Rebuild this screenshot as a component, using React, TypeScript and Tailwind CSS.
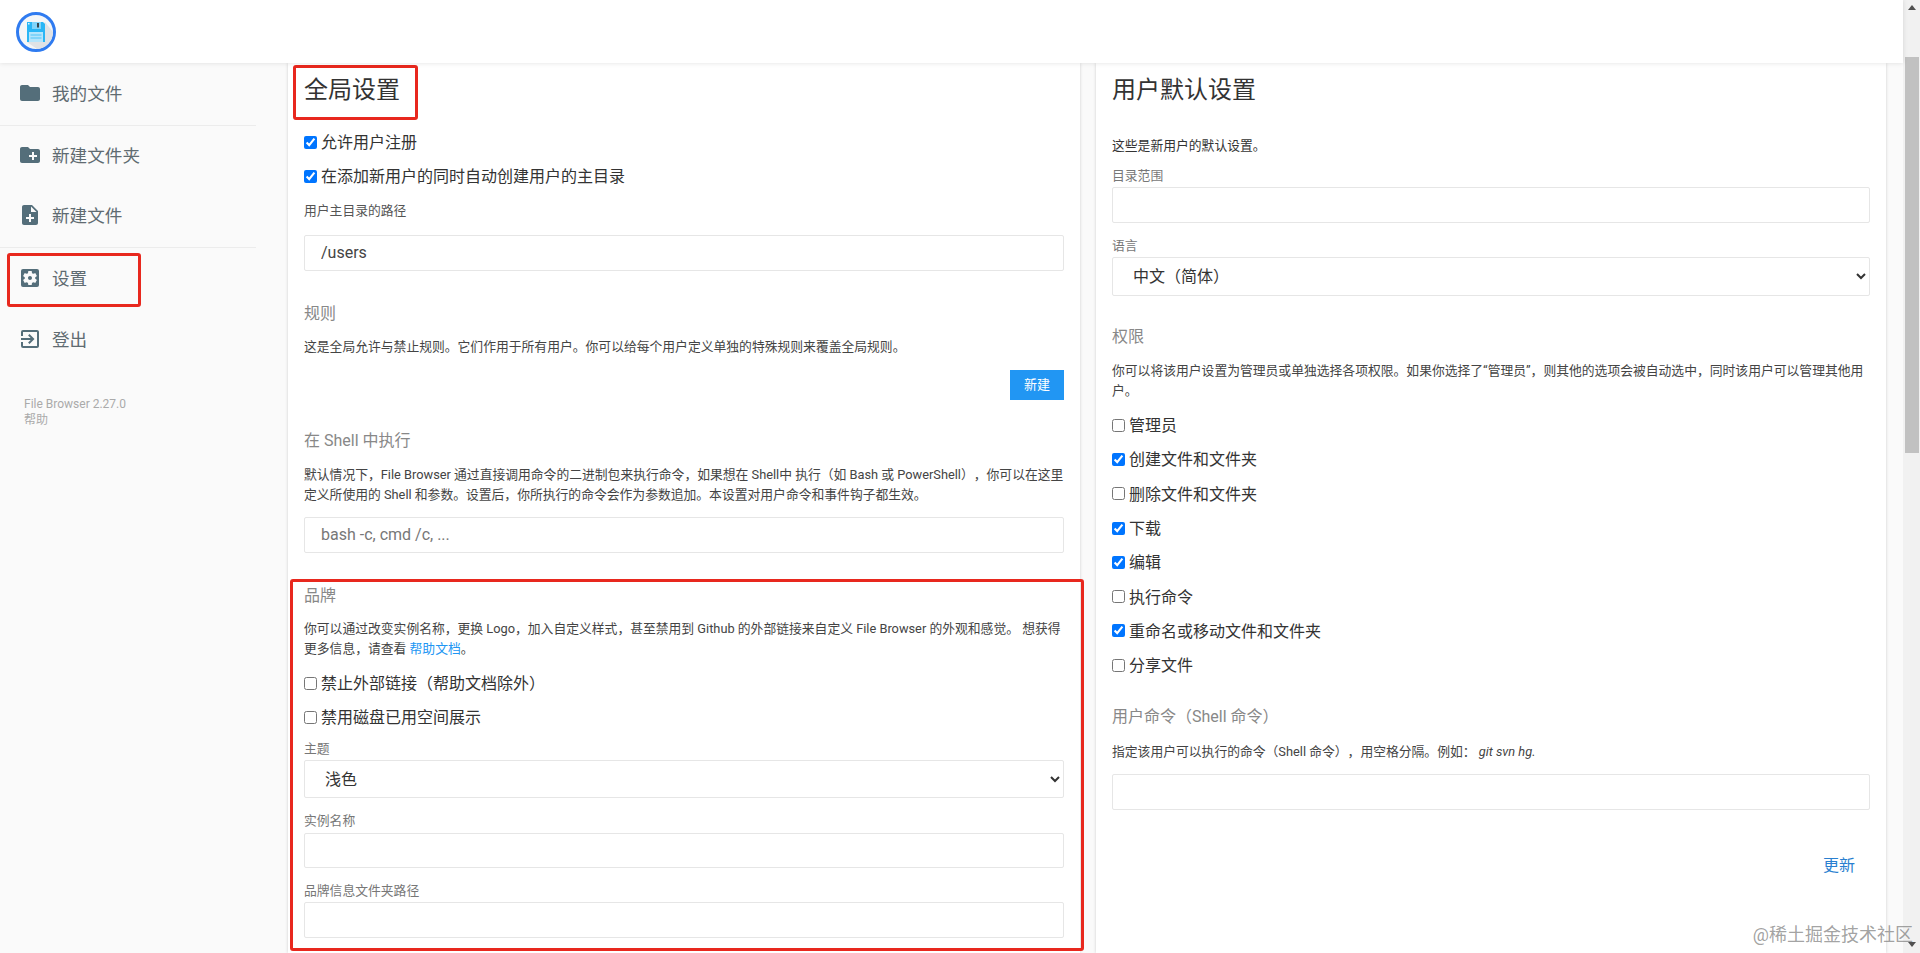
import React from "react";
import {
  MdCreateNewFolder,
  MdExitToApp,
  MdFolder,
  MdNoteAdd,
  MdSettingsApplications,
} from "react-icons/md";

type NavProps = { icon: React.ReactNode; label: string; className?: string };

function NavItem({ icon, label, className = "" }: NavProps) {
  return (
    <div className={`flex h-12 items-center gap-2.5 pl-[18px] text-[17.6px] text-[#5f6b71] ${className}`}>
      <span className="text-[#546e7a]">{icon}</span>
      <span className="pt-0.5">{label}</span>
    </div>
  );
}

function Check({ label, checked = false, className = "h-[34px]" }: { label: string; checked?: boolean; className?: string }) {
  return (
    <label className={`flex items-center text-base text-[#333] ${className}`}>
      <input type="checkbox" defaultChecked={checked} className="mr-1" />
      <span className="pt-0.5">{label}</span>
    </label>
  );
}

function Field({ value, placeholder, className = "" }: { value?: string; placeholder?: string; className?: string }) {
  return (
    <input
      type="text"
      defaultValue={value}
      placeholder={placeholder}
      className={`block h-9 w-full rounded-[2px] border border-[#e6e6e6] bg-white px-4 pb-0.5 text-base text-[#444] placeholder:text-[#777] ${className}`}
    />
  );
}

function Picker({ value, className = "" }: { value: string; className?: string }) {
  return (
    <select className={`block w-full rounded-[2px] border border-[#e6e6e6] bg-white px-4 text-base text-[#333] ${className}`}>
      <option>{value}</option>
    </select>
  );
}

function Logo() {
  return (
    <svg width="40" height="40" viewBox="0 0 40 40">
      <circle cx="20" cy="20" r="18.5" fill="#f4f6f8" stroke="#2f7bf0" strokeWidth="3" />
      <path d="M11 30 L29 10 L37 20 A17 17 0 0 1 21 37 Z" fill="#dfe2e5" />
      <path d="M11 10 H27 L29 12 V30 H11 Z" fill="#29b6f6" />
      <rect x="16" y="10" width="9" height="7" fill="#81d4fa" />
      <rect x="21" y="11" width="2" height="4.5" fill="#37474f" />
      <rect x="13" y="20" width="14" height="10" fill="#b3e5fc" />
      <path d="M14.5 23 H25.5 M14.5 26 H25.5" stroke="#4fc3f7" strokeWidth="1" />
      <rect x="12" y="11" width="1.5" height="1.5" fill="#e1f5fe" />
    </svg>
  );
}

function Sidebar() {
  return (
    <aside className="w-[272px] shrink-0 pt-1.5">
      <NavItem icon={<MdFolder size={24} />} label="我的文件" />
      <div className="mt-2 h-px w-[256px] bg-[#ececec]" />
      <NavItem icon={<MdCreateNewFolder size={24} />} label="新建文件夹" className="mt-[5px]" />
      <NavItem icon={<MdNoteAdd size={24} />} label="新建文件" className="mt-3" />
      <div className="mt-2 h-px w-[256px] bg-[#ececec]" />
      <div className="relative mt-1.5">
        <NavItem icon={<MdSettingsApplications size={24} />} label="设置" />
        <div className="absolute -top-px -bottom-[5px] left-[7px] w-[134px] rounded-[3px] border-[3px] border-[#e8281e]" />
      </div>
      <NavItem icon={<MdExitToApp size={24} />} label="登出" className="mt-[13px]" />
      <div className="mt-[33px] pl-6 text-xs leading-4 text-[#aaa]">
        <p>File Browser 2.27.0</p>
        <p>帮助</p>
      </div>
    </aside>
  );
}

function GlobalCard() {
  return (
    <section className="w-[792px] shrink-0 bg-white px-4 pt-[9px] shadow-[0_0_3px_rgba(0,0,0,0.18)]">
      <div className="relative">
        <h2 className="pt-0.5 text-2xl leading-8 font-normal text-[#333]">全局设置</h2>
        <div className="absolute -top-[7px] -bottom-[14px] -left-[11px] z-10 w-[125px] rounded-[3px] border-[3px] border-[#e8281e]" />
      </div>
      <div className="mt-[19px]">
        <Check label="允许用户注册" checked />
        <Check label="在添加新用户的同时自动创建用户的主目录" checked />
      </div>
      <p className="mt-[9px] text-[12.8px] leading-[18px] text-[#555]">用户主目录的路径</p>
      <Field value="/users" className="mt-[15px]" />

      <h3 className="mt-[29px] pt-0.5 text-base leading-6 font-normal text-[#888]">规则</h3>
      <p className="mt-[11px] text-[12.8px] leading-5 text-[#444]">
        这是全局允许与禁止规则。它们作用于所有用户。你可以给每个用户定义单独的特殊规则来覆盖全局规则。
      </p>
      <div className="mt-[13px] flex justify-end">
        <button className="h-[30px] w-[54px] bg-[#2196f3] text-[13px] text-white">新建</button>
      </div>

      <h3 className="mt-[29px] text-base leading-6 font-normal text-[#888]">在 Shell 中执行</h3>
      <p className="mt-3 text-[12.8px] leading-5 text-[#444]">
        默认情况下，File Browser 通过直接调用命令的二进制包来执行命令，如果想在 Shell中 执行（如 Bash 或 PowerShell），你可以在这里定义所使用的 Shell 和参数。设置后，你所执行的命令会作为参数追加。本设置对用户命令和事件钩子都生效。
      </p>
      <Field placeholder="bash -c, cmd /c, ..." className="mt-3" />

      <div className="relative mt-[29px]">
        <div className="absolute -top-[3px] -right-5 -bottom-[13px] -left-[14px] z-10 rounded-[3px] border-[3px] border-[#e8281e]" />
        <h3 className="pt-0.5 text-base leading-6 font-normal text-[#888]">品牌</h3>
        <p className="mt-[11px] text-[12.8px] leading-5 text-[#444]">
          你可以通过改变实例名称，更换 Logo，加入自定义样式，甚至禁用到 Github 的外部链接来自定义 File Browser 的外观和感觉。 想获得更多信息，请查看 <a className="text-[#2196f3]">帮助文档</a>。
        </p>
        <div className="mt-[7px]">
          <Check label="禁止外部链接（帮助文档除外）" />
          <Check label="禁用磁盘已用空间展示" />
        </div>
        <p className="mt-1.5 text-[12.8px] leading-[18px] text-[#777]">主题</p>
        <Picker value="浅色" className="mt-0.5 h-[38px]" />
        <p className="mt-3.5 text-[12.8px] leading-[18px] text-[#777]">实例名称</p>
        <Field className="mt-[3px] h-[35px]" />
        <p className="mt-3.5 text-[12.8px] leading-[18px] text-[#777]">品牌信息文件夹路径</p>
        <Field className="mt-0.5" />
      </div>
    </section>
  );
}

const perms: [string, boolean][] = [
  ["管理员", false],
  ["创建文件和文件夹", true],
  ["删除文件和文件夹", false],
  ["下载", true],
  ["编辑", true],
  ["执行命令", false],
  ["重命名或移动文件和文件夹", true],
  ["分享文件", false],
];

function DefaultsCard() {
  return (
    <section className="w-[790px] shrink-0 bg-white px-4 pt-[9px] shadow-[0_0_3px_rgba(0,0,0,0.18)]">
      <h2 className="pt-0.5 text-2xl leading-8 font-normal text-[#333]">用户默认设置</h2>
      <p className="mt-[29px] text-[12.8px] leading-[21px] text-[#333]">这些是新用户的默认设置。</p>
      <p className="mt-[11px] text-[12.8px] leading-[18px] text-[#777]">目录范围</p>
      <Field className="mt-0.5" />
      <p className="mt-3.5 text-[12.8px] leading-[18px] text-[#777]">语言</p>
      <Picker value="中文（简体）" className="mt-0.5 h-[39px]" />

      <h3 className="mt-[29px] text-base leading-6 font-normal text-[#888]">权限</h3>
      <p className="mt-3 text-[12.8px] leading-5 text-[#444]">
        你可以将该用户设置为管理员或单独选择各项权限。如果你选择了“管理员”，则其他的选项会被自动选中，同时该用户可以管理其他用户。
      </p>
      <div className="mt-[7px]">
        {perms.map(([label, checked]) => (
          <Check key={label} label={label} checked={checked} className="h-[34.3px]" />
        ))}
      </div>

      <h3 className="mt-[23px] text-base leading-6 font-normal text-[#888]">用户命令（Shell 命令）</h3>
      <p className="mt-[13px] text-[12.8px] leading-5 text-[#444]">
        指定该用户可以执行的命令（Shell 命令），用空格分隔。例如： <i>git svn hg.</i>
      </p>
      <Field className="mt-3" />
      <div className="mt-[38px] flex justify-end">
        <button className="h-9 px-[15px] text-base text-[#2a7fd0]">更新</button>
      </div>
    </section>
  );
}

function Scrollbar() {
  return (
    <div className="flex w-[17px] shrink-0 flex-col bg-[#f1f1f1]">
      <div className="mx-auto mt-[5px] h-0 w-0 border-x-[4px] border-b-[5px] border-x-transparent border-b-[#505050]" />
      <div className="mt-[47px] ml-0.5 h-[396px] w-[14px] bg-[#c1c1c1]" />
      <div className="mx-auto mt-auto mb-[6px] h-0 w-0 border-x-[4px] border-t-[5px] border-x-transparent border-t-[#505050]" />
    </div>
  );
}

export default function App() {
  return (
    <div className="relative flex h-screen overflow-hidden bg-[#fafafa] font-[Roboto,'Noto_Sans_CJK_SC',sans-serif] [text-spacing-trim:space-all]">
      <div className="flex min-w-0 flex-1 flex-col">
        <header className="relative z-20 flex h-[63px] shrink-0 items-center bg-white pl-4 shadow-[0_0_5px_rgba(0,0,0,0.12)]">
          <Logo />
        </header>
        <main className="flex min-h-0 flex-1 gap-4 overflow-hidden">
          <Sidebar />
          <GlobalCard />
          <DefaultsCard />
        </main>
      </div>
      <Scrollbar />
      <span className="absolute right-[7px] bottom-1 z-30 text-lg text-[rgba(110,110,110,0.65)]">@稀土掘金技术社区</span>
    </div>
  );
}
